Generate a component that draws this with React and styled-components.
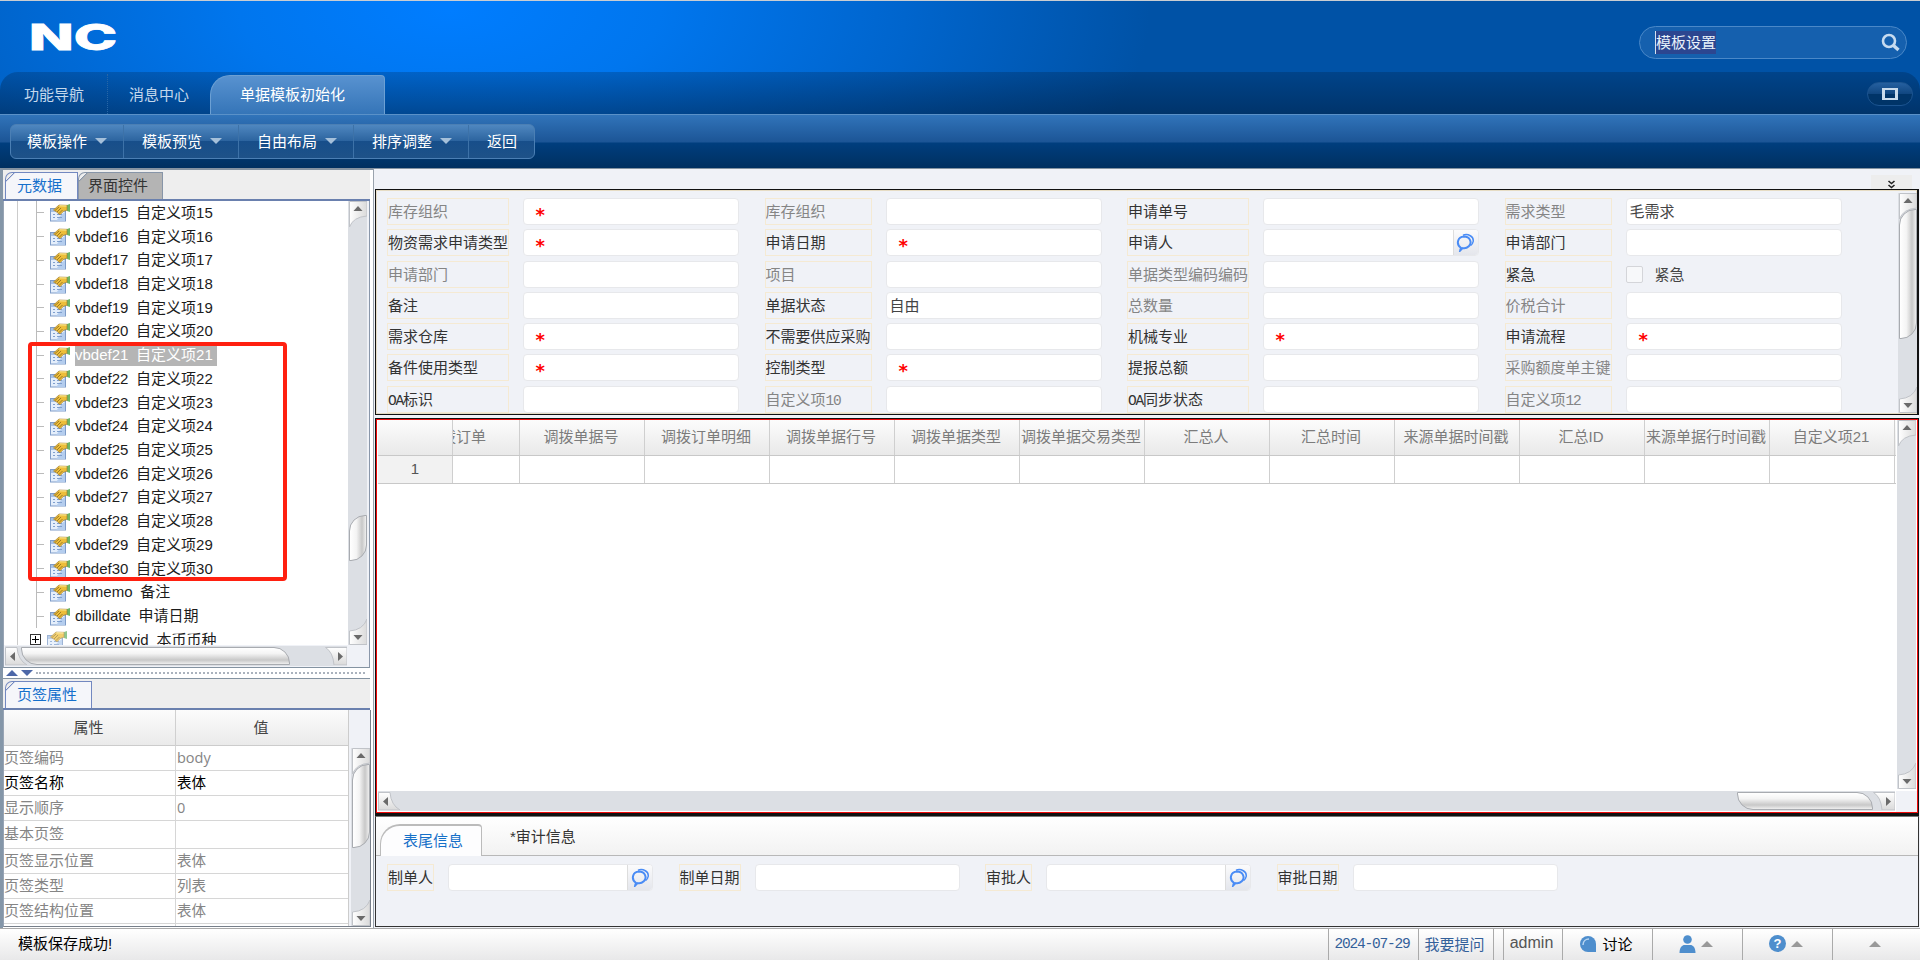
import React from "react";
import styled, { createGlobalStyle, css } from "styled-components";

const GlobalStyle = createGlobalStyle`
  * {
    box-sizing: border-box;
  }
  body {
    margin: 0;
    overflow: hidden;
    font-family: "Liberation Sans", "Noto Sans CJK SC", sans-serif;
    font-size: 15px;
    color: #000;
  }
`;

const Page = styled.div`
  width: 1920px;
  height: 960px;
  display: flex;
  flex-direction: column;
  background: #f0f2f7;
  white-space: nowrap;
`;

/* ---------- header ---------- */

const Header = styled.header`
  height: 114px;
  flex: none;
  display: flex;
  flex-direction: column;
  border-top: 1px solid #c9cdd2;
  background: radial-gradient(ellipse 700px 320px at 450px 10px, #007dff 0%, #0076ee 30%, #0065cd 65%, #0052a6 100%);
`;

const Brand = styled.div`
  height: 71px;
  display: flex;
  justify-content: space-between;
  align-items: flex-start;
  padding: 19px 13px 0 29px;
`;

const Logo = styled.svg`
  width: 90px;
  height: 40px;
  overflow: visible;
`;

const SearchBox = styled.div`
  width: 268px;
  height: 33px;
  margin-top: 6px;
  padding: 0 6px 0 15px;
  display: flex;
  align-items: center;
  justify-content: space-between;
  border: 1px solid #4a88c8;
  border-radius: 17px;
  background: #1560ae;
  color: #e8f1fa;
`;

const Selected = styled.span`
  height: 23px;
  line-height: 24px;
  background: #2c4690;
  border-left: 1px solid #d5e2f0;
`;

const NavStrip = styled.nav`
  height: 42px;
  display: flex;
  align-items: flex-end;
  border-radius: 18px 18px 0 0;
  background: linear-gradient(rgba(0, 10, 25, 0.2), rgba(0, 10, 25, 0.42));
  color: #c4d8ec;
`;

const NavItem = styled.div`
  width: ${(p) => p.$w}px;
  height: 40px;
  line-height: 41px;
  padding-left: ${(p) => p.$pad}px;
  border-right: ${(p) => (p.$sep ? "1px dotted #2866a6" : "none")};
`;

const NavActive = styled.div`
  width: 175px;
  height: 39px;
  line-height: 38px;
  padding-left: 29px;
  color: #fff;
  border: 1px solid #6ca0d4;
  border-bottom: none;
  border-radius: 20px 4px 0 0;
  background: linear-gradient(#5892d0, #3575b8);
`;

const WindowButton = styled.div`
  margin: 0 7px 8px auto;
  width: 46px;
  height: 24px;
  display: flex;
  align-items: center;
  justify-content: center;
  border: 1px solid #1c5490;
  border-radius: 12px;
  background: linear-gradient(#2560a0 0%, #104680 50%, #003468 51%, #003468 100%);
`;

const WindowGlyph = styled.span`
  width: 16px;
  height: 12px;
  border: 2px solid #c9dbec;
  border-width: 2px 3px;
`;

const Toolbar = styled.div`
  height: 54px;
  flex: none;
  padding: 9px 10px 0;
  border-top: 1px solid #5a91c8;
  background: linear-gradient(#3174ba 0, #1c5596 27px, #003e7e 28px, #003060 100%);
`;

const ButtonGroup = styled.div`
  width: 525px;
  height: 35px;
  display: flex;
  border: 1px solid #4b7fb4;
  border-radius: 6px;
  background: linear-gradient(#4f87c0 0%, #2c649f 48%, #174e8a 50%, #1e5288 100%);
`;

const ToolButton = styled.div`
  width: ${(p) => p.$w || 115}px;
  padding-left: ${(p) => p.$pad || 18}px;
  padding-bottom: 2px;
  display: flex;
  align-items: center;
  gap: 8px;
  color: #fff;
  border-left: ${(p) => (p.$first ? "none" : "1px solid #3d72a8")};
`;

const Triangle = styled.i`
  border: ${(p) => p.$s || 6}px solid transparent;
  ${(p) =>
    p.$up
      ? css`
          border-top-width: 0;
          border-bottom-color: ${p.$c};
        `
      : css`
          border-bottom-width: 0;
          border-top-color: ${p.$c};
        `}
`;

/* ---------- body ---------- */

const Body = styled.div`
  height: 760px;
  flex: none;
  display: flex;
`;

const Side = styled.aside`
  width: 374px;
  height: 760px;
  padding-right: 3px;
  display: flex;
  flex-direction: column;
  border-top: 2px solid #8493a1;
  border-left: 3px solid #8496a8;
  border-right: 1px solid #9aa3ad;
  background: #fff;
`;

const SideTabs = styled.div`
  height: 31px;
  flex: none;
  padding: 3px 2px 0;
  display: flex;
  align-items: flex-end;
  background: #eee;
  border-bottom: 2px solid #6a80ae;
`;

const SideTab = styled.div`
  height: 27px;
  width: ${(p) => p.$w}px;
  padding-left: ${(p) => (p.$on ? 11 : 9)}px;
  line-height: 25px;
  color: ${(p) => (p.$on ? "#1570cc" : "#333")};
  background: ${(p) =>
    p.$on
      ? "linear-gradient(135deg, #eee 5px, #7288c0 5px, #7288c0 6px, #f5f6fa 6.5px)"
      : "linear-gradient(135deg, #eee 5px, #8795a8 5px, #8795a8 6px, #b4b4b4 6.5px)"};
  border: 1px solid ${(p) => (p.$on ? "#7288c0" : "#8795a8")};
  border-bottom: none;
  border-top-left-radius: 7px;
`;

const TreeBox = styled.div`
  width: 367px;
  height: 467px;
  flex: none;
  display: grid;
  grid-template-columns: 344px 21px;
  grid-template-rows: 444px 22px;
  border-right: 1px solid #8a97aa;
  border-bottom: 1px solid #8493a1;
  border-left: 1px solid #98a4b4;
  background: #f0f2f7;
  position: relative;
`;

const Tree = styled.div`
  overflow: hidden;
  background: #fff;
`;

const TreeLines = styled.div`
  margin-left: 13px;
  border-left: 1px solid #ccc;
`;

const TreeRow = styled.div`
  height: 23.73px;
  margin-left: 18px;
  display: flex;
  align-items: center;
  border-left: 1px solid ${(p) => (p.$root ? "transparent" : "#bbb")};
`;

const Dash = styled.i`
  width: 7px;
  height: 1px;
  background: #bbb;
`;

const Expander = styled.i`
  width: 11px;
  height: 11px;
  margin-left: -7px;
  margin-right: 5px;
  position: relative;
  border: 1px solid #333;
  background: #fff;
  &::before,
  &::after {
    content: "";
    position: absolute;
    background: #000;
  }
  &::before {
    left: 1px;
    top: 4px;
    width: 7px;
    height: 1px;
  }
  &::after {
    left: 4px;
    top: 1px;
    width: 1px;
    height: 7px;
  }
`;

const TreeIcon = styled.svg`
  width: 20px;
  height: 19px;
  margin: 0 5px 0 ${(p) => (p.$root ? 1 : 6)}px;
  flex: none;
  opacity: ${(p) => (p.$root ? 0.75 : 1)};
`;

const TreeText = styled.span`
  height: 22px;
  line-height: 21px;
  padding: 0 4px 0 0;
  white-space: pre;
  word-spacing: -0.3px;
  color: ${(p) => (p.$sel ? "#fff" : "#1c1c1c")};
  background: ${(p) => (p.$sel ? "#b5b5b5" : "none")};
`;

/* red frame marking the free custom items, lies over the tree */
const Marker = styled.div`
  position: absolute;
  left: 24px;
  top: 141px;
  width: 259px;
  height: 239px;
  border: 4px solid #ff2010;
  border-radius: 4px;
`;

const Splitter = styled.div`
  height: 11px;
  flex: none;
  padding: 0 5px 0 3px;
  display: flex;
  align-items: center;
  gap: 3px;
  background: #fff;
  border-bottom: 1px solid #8493a1;
`;

const Dots = styled.i`
  flex: 1;
  border-top: 2px dotted #aab2bd;
`;

const PropBox = styled.div`
  height: 217px;
  width: 368px;
  flex: none;
  overflow: hidden;
  display: flex;
  background: #f0f2f7;
  border: 1px solid #777f8a;
  border-top: none;
  border-left-color: #98a4b4;
`;

const PropTable = styled.div`
  width: 345px;
  border-right: 1px solid #ccc;
`;

const PropHead = styled.div`
  height: 36px;
  line-height: 36px;
  display: grid;
  grid-template-columns: 172px 1fr;
  text-align: center;
  color: #444;
  background: linear-gradient(#fcfcfc, #eaeaea);
  border-bottom: 1px solid #ccc;
  & > * {
    padding-right: 2px;
  }
  & > *:first-child {
    border-right: 1px solid #d0d0d0;
  }
`;

const PropRow = styled.div`
  height: ${(p) => p.$h}px;
  line-height: ${(p) => p.$h - 2}px;
  display: grid;
  grid-template-columns: 172px 1fr;
  color: ${(p) => (p.$on ? "#000" : "#858585")};
  background: #fff;
  border-bottom: 1px solid #d6d6d6;
  & > *:first-child {
    border-right: 1px solid #d6d6d6;
  }
`;

const PropValue = styled.div`
  padding-left: 1px;
  font-family: "Open Sans", "Noto Sans CJK SC", sans-serif;
  font-size: 14.5px;
`;

const PropScroll = styled.div`
  width: 21px;
  padding: 38px 0 0 2px;
  display: flex;
`;

/* ---------- scrollbars ---------- */

const VTrack = styled.div`
  width: 19px;
  flex: 1;
  display: flex;
  flex-direction: column;
  align-items: center;
  background: #dcdfe4;
`;

const HTrack = styled.div`
  height: 20px;
  display: flex;
  align-items: center;
  background: #dcdfe4;
`;

const VThumb = styled.div`
  width: 18px;
  height: ${(p) => p.$size}px;
  margin-top: ${(p) => p.$at}px;
  border: 1px solid #a8abb0;
  border-radius: 16px 0 16px 0;
  background: linear-gradient(90deg, #fff, #f4f4f4 40%, #c8c8c8 75%, #eee);
`;

const HThumb = styled.div`
  height: 18px;
  width: ${(p) => p.$size}px;
  margin-left: ${(p) => p.$at}px;
  border: 1px solid #a8abb0;
  border-radius: 0 16px 0 16px;
  background: linear-gradient(#fff, #f4f4f4 35%, #c8c8c8 75%, #eee);
`;

const ArrowSvg = styled.svg`
  flex: none;
  display: block;
`;

const endShape = {
  up: "M0.5 0.5H18V15Q4 16 0.5 26Z",
  down: "M18 25.5H0.5V12Q14 11 18 0Z",
  left: "M0.5 0.5H12Q13 13 22 18H0.5Z",
  right: "M22 18V0.5H0.5Q8 5 9 18Z",
};
const endArrow = {
  up: "M9 5l4.5 5h-9z",
  down: "M9 21l4.5-5h-9z",
  left: "M5 9.5l5-4.5v9z",
  right: "M18 9.5l-5-4.5v9z",
};

const ScrollEnd = ({ dir }) => {
  const vertical = dir === "up" || dir === "down";
  return (
    <ArrowSvg width={vertical ? 18 : 22} height={vertical ? 26 : 18}>
      <defs>
        <linearGradient id={"end-" + dir} x2={vertical ? 1 : 0} y2={vertical ? 0 : 1}>
          <stop offset="0" stopColor="#fff" />
          <stop offset="1" stopColor="#dadada" />
        </linearGradient>
      </defs>
      <path d={endShape[dir]} fill={`url(#end-${dir})`} stroke="#c0c3c8" />
      <path d={endArrow[dir]} fill="#6a6a6a" />
    </ArrowSvg>
  );
};

const Push = styled.i`
  flex: 1;
`;

const VScroll = ({ at, size }) => (
  <VTrack>
    <ScrollEnd dir="up" />
    {size ? <VThumb $at={at} $size={size} /> : null}
    <Push />
    <ScrollEnd dir="down" />
  </VTrack>
);

const HScroll = ({ at, size }) => (
  <HTrack>
    <ScrollEnd dir="left" />
    <HThumb $at={at} $size={size} />
    <Push />
    <ScrollEnd dir="right" />
  </HTrack>
);

const TreeHScroll = styled.div`
  padding: 1px 1px 0 1px;
`;

/* ---------- main ---------- */

const Main = styled.main`
  width: 1546px;
  padding: 0 1px 0 1px;
  display: flex;
  flex-direction: column;
  border-top: 1px solid #8493a1;
`;

const TopBar = styled.div`
  height: 20px;
  flex: none;
  padding: 6px 7px 0 0;
  display: flex;
  justify-content: flex-end;
`;

const Collapse = styled.div`
  width: 41px;
  height: 14px;
  display: flex;
  justify-content: center;
  align-items: flex-end;
  background: #ededed;
`;

const FormPanel = styled.section`
  height: 226px;
  width: 1544px;
  flex: none;
  overflow: hidden;
  display: flex;
  justify-content: space-between;
  border: 1px solid #111;
  border-right-width: 2px;
  box-shadow: inset 0 0 0 1px #e6dcc4;
`;

const FormGrid = styled.div`
  display: grid;
  padding: 8px 0 0 11px;
  grid-template-columns: 122px 255.5px 107.5px 255px 122px 255.5px 107.5px 255px;
  grid-auto-rows: 27px;
  row-gap: 4.25px;
`;

const FormPair = styled.div`
  display: contents;
`;

const FieldCell = styled.div`
  padding-left: 13.5px;
`;

const FormScroll = styled.div`
  padding: 3px 0 1px 0;
  display: flex;
`;

const Label = styled.div`
  height: 27px;
  line-height: 26px;
  border: 1px solid #f5ead3;
  overflow: hidden;
  color: ${(p) => (p.$dim ? "#858585" : "#333")};
`;

const Field = styled.div`
  width: ${(p) => p.$w || 216}px;
  height: 27px;
  line-height: 25px;
  padding-left: 3px;
  flex: none;
  display: flex;
  color: #444;
  background: #fff;
  border: 1px solid #e7e8eb;
  border-radius: 4px;
  overflow: hidden;
`;

const Star = styled.span`
  padding-left: 9px;
  color: #f00;
  font: 700 18px/31px "DejaVu Sans", sans-serif;
`;

const RefButton = styled.span`
  width: 25px;
  margin-left: auto;
  display: flex;
  align-items: center;
  justify-content: center;
  border-left: 1px solid #ddd;
  background: linear-gradient(#fbfbfc, #e4e6ec);
`;

const CheckRow = styled.div`
  display: flex;
  align-items: center;
  gap: 12px;
  height: 27px;
  line-height: 25px;
  color: #444;
`;

const CheckBox = styled.span`
  width: 17px;
  height: 17px;
  border: 1px solid #d4d5d9;
  border-radius: 2px;
  background: #f7f8fa;
`;

const Half = styled.span`
  font: 14.5px "Liberation Mono", monospace;
  letter-spacing: -1.2px;
`;

const TablePanel = styled.section`
  width: 1544px;
  height: 398px;
  margin-top: 3px;
  flex: none;
  display: grid;
  grid-template-columns: 1519px 21px;
  grid-template-rows: 1fr 21px;
  border: 1px solid #111;
  border-bottom-width: 3px;
  padding: 1px;
  background: #fff;
  box-shadow: inset 0 0 0 1px #f00a0a;
`;

const TableArea = styled.div`
  padding: 0 0 0 1px;
  overflow: hidden;
`;

const TableRow = styled.div`
  width: 1518px;
  height: ${(p) => (p.$head ? 36 : 28)}px;
  line-height: ${(p) => (p.$head ? 34 : 26)}px;
  display: grid;
  grid-template-columns: 75px 67px repeat(11, 125px);
  color: #7c7c7c;
  background: ${(p) => (p.$head ? "linear-gradient(#fcfcfc, #e9e9e9)" : "#fff")};
  border-bottom: 1px solid #c8c8c8;
`;

const Cell = styled.div`
  display: flex;
  justify-content: ${(p) => (p.$end ? "flex-end" : "center")};
  padding-right: ${(p) => (p.$end ? 33 : p.$num ? 0 : 2)}px;
  overflow: hidden;
  color: ${(p) => (p.$num ? "#555" : "inherit")};
  background: ${(p) => (p.$num ? "#f2f2f2" : "none")};
  border-right: 1px solid #cfcfcf;
`;

const HeadClip = styled.span`
  flex: none;
`;

const TableScroll = styled.div`
  padding: 0 1px 2px 1px;
  display: flex;
`;

const TableHScroll = styled.div`
  padding: 0 1px 0 1px;
`;

const TableCorner = styled.div`
  background: #f0f2f7;
`;

const FootPanel = styled.section`
  width: 1544px;
  height: 111px;
  flex: none;
  border: 1px solid #333;
  border-top: 1px solid #777;
  background: #f0f2f7;
`;

const FootTabs = styled.div`
  height: 39px;
  padding-left: 4px;
  display: flex;
  align-items: flex-end;
  background: linear-gradient(#fff, #f2f2f2);
  border-bottom: 1px solid #b8b8b8;
`;

const FootTab = styled.div`
  height: 32px;
  line-height: 30px;
  margin-bottom: ${(p) => (p.$on ? "-1px" : "1px")};
  padding: ${(p) => (p.$on ? "0 18px 0 22px" : "0 0 0 28px")};
  color: ${(p) => (p.$on ? "#1570c8" : "#333")};
  background: ${(p) => (p.$on ? "#fdfdfe" : "none")};
  border: solid #bbb;
  border-width: ${(p) => (p.$on ? "2px 1px 0" : 0)};
  border-radius: 20px 4px 0 0;
`;

const FootFields = styled.div`
  padding: 8px 0 0 11px;
  display: flex;
  & > ${Field} {
    margin: 0 25.5px 0 14px;
  }
`;

/* ---------- status bar ---------- */

const StatusBar = styled.footer`
  height: 32px;
  flex: none;
  display: flex;
  align-items: stretch;
  border-top: 1px solid #aaa;
  background: linear-gradient(#fff, #e8e8e9);
`;

const Message = styled.div`
  flex: 1;
  padding-left: 18px;
  line-height: 29px;
`;

const StatusItem = styled.div`
  width: ${(p) => p.$w}px;
  padding: 0 3px 2px 0;
  display: flex;
  align-items: center;
  justify-content: center;
  gap: 5px;
  color: ${(p) => p.$c || "#000"};
  border-left: 1px solid #aaa;
`;

const DateText = styled.span`
  font: 14.5px "Liberation Mono", monospace;
  letter-spacing: -1.2px;
`;

const UserName = styled.span`
  font-size: 16px;
  line-height: 28px;
  height: 30px;
`;

const HelpDot = styled.span`
  width: 17px;
  height: 17px;
  line-height: 17px;
  border-radius: 50%;
  text-align: center;
  font-weight: 700;
  font-size: 13px;
  color: #fff;
  background: #4e8ecd;
`;

/* ---------- data ---------- */

const treeItems = [
  ...Array.from({ length: 16 }, (_, i) => `vbdef${i + 15}  自定义项${i + 15}`),
  "vbmemo  备注",
  "dbilldate  申请日期",
];

const formItems = [
  ["库存组织", 1, "*"], ["库存组织", 1], ["申请单号", 0], ["需求类型", 1, "毛需求"],
  ["物资需求申请类型", 0, "*"], ["申请日期", 0, "*"], ["申请人", 0, "ref"], ["申请部门", 0],
  ["申请部门", 1], ["项目", 1], ["单据类型编码编码", 1], ["紧急", 0, "check"],
  ["备注", 0], ["单据状态", 0, "自由"], ["总数量", 1], ["价税合计", 1],
  ["需求仓库", 0, "*"], ["不需要供应采购", 0], ["机械专业", 0, "*"], ["申请流程", 0, "*"],
  ["备件使用类型", 0, "*"], ["控制类型", 0, "*"], ["提报总额", 0], ["采购额度单主键", 1],
  ["OA标识", 0], ["自定义项10", 1], ["OA同步状态", 0], ["自定义项12", 1],
];

const columns = [
  "调拨单据号", "调拨订单明细", "调拨单据行号", "调拨单据类型", "调拨单据交易类型", "汇总人",
  "汇总时间", "来源单据时间戳", "汇总ID", "来源单据行时间戳", "自定义项21",
];

const tabProps = [
  ["页签编码", "body", 25],
  ["页签名称", "表体", 25],
  ["显示顺序", "0", 25],
  ["基本页签", "", 28],
  ["页签显示位置", "表体", 25],
  ["页签类型", "列表", 25],
  ["页签结构位置", "表体", 25],
  ["", "", 25],
];

const halfWidth = (text) =>
  text.split(/([0-9A-Z]+)/).map((part, i) => (i % 2 ? <Half key={i}>{part}</Half> : part));

const PropIcon = ({ root }) => (
  <TreeIcon viewBox="0 0 20 19" $root={root}>
    <rect x="0.5" y="5.5" width="15" height="12.500" fill="#e4eefb" stroke="#7e9cc8" />
    <path d="M1 6h14v3H1z" fill="#a5c0e4" />
    <path d="M11 12l4-3v9H6z" fill="#b4cdee" />
    <path d="M3 11.500h2M3 14.500h2M7 11.500h5M7 14.500h5" stroke="#7f9fce" strokeWidth="1.200" />
    <path d="M17 2l3-1v8l-3-1z" fill="#6db566" />
    <path d="M3.500 7l5.500-5 8 .300v5l-3.500 1-3.500 3.500-3-2.500z" fill="#edbe3a" stroke="#9a7428" strokeWidth=".6" />
    <path d="M5 7.500l4-3.500M7 9l4-4M9 10.500l3.500-3.500" stroke="#8c6820" strokeWidth=".8" />
    <path d="M9.500 2.800l7 .2" stroke="#fff0a0" />
  </TreeIcon>
);

const RefIcon = () => (
  <svg width="19" height="19" viewBox="0 0 19 19" fill="none" stroke="#4a8cf5">
    <path d="M7 2.200C12 .300 18 3.500 17.200 8.500c-.4 2.200-1.500 3.300-2.700 4" strokeWidth="1.500" />
    <path d="M4.200 17.500l.6-2.800C-.200 11 1.500 4 8 3.600c6 0 8.500 6 4.800 9.600-2 2-4.500 2.300-6.200 1.900z" strokeWidth="2" />
  </svg>
);

const FormValue = ({ value }) => {
  if (value === "check") {
    return (
      <CheckRow>
        <CheckBox />
        紧急
      </CheckRow>
    );
  }
  return (
    <Field>
      {value === "*" && <Star>*</Star>}
      {value === "ref" && (
        <RefButton>
          <RefIcon />
        </RefButton>
      )}
      {value !== "*" && value !== "ref" && value}
    </Field>
  );
};

const App = () => {
  return (
    <Page>
      <GlobalStyle />
      <Header>
        <Brand>
          <Logo>
            <text
              x="0"
              y="30"
              fill="#fff"
              stroke="#fff"
              strokeWidth="0.8"
              fontFamily="Inter"
              fontWeight="800"
              fontSize="36"
              textLength="88"
              lengthAdjust="spacingAndGlyphs"
            >
              NC
            </text>
          </Logo>
          <SearchBox>
            <Selected>模板设置</Selected>
            <svg width="19" height="19" fill="none" stroke="#c6dbf0">
              <circle cx="8" cy="8" r="6" strokeWidth="2.6" />
              <path d="M12.500 12.500l5 4.500" strokeWidth="3.400" />
            </svg>
          </SearchBox>
        </Brand>
        <NavStrip>
          <NavItem $w={108} $pad={24} $sep>功能导航</NavItem>
          <NavItem $w={102} $pad={21}>消息中心</NavItem>
          <NavActive>单据模板初始化</NavActive>
          <WindowButton>
            <WindowGlyph />
          </WindowButton>
        </NavStrip>
      </Header>
      <Toolbar>
        <ButtonGroup>
          <ToolButton $first $w={112} $pad={16}>模板操作 <Triangle $c="#a5c0da" /></ToolButton>
          <ToolButton>模板预览 <Triangle $c="#a5c0da" /></ToolButton>
          <ToolButton>自由布局 <Triangle $c="#a5c0da" /></ToolButton>
          <ToolButton>排序调整 <Triangle $c="#a5c0da" /></ToolButton>
          <ToolButton $w={66}>返回</ToolButton>
        </ButtonGroup>
      </Toolbar>

      <Body>
        <Side>
          <SideTabs>
            <SideTab $on $w={73}>元数据</SideTab>
            <SideTab $w={85}>界面控件</SideTab>
          </SideTabs>
          <TreeBox>
            <Tree>
              <TreeLines>
                {treeItems.map((text) => (
                  <TreeRow key={text}>
                    <Dash />
                    <PropIcon />
                    <TreeText $sel={text.startsWith("vbdef21")}>{text}</TreeText>
                  </TreeRow>
                ))}
                <TreeRow $root>
                  <Expander />
                  <PropIcon root />
                  <TreeText>{"ccurrencyid  本币币种"}</TreeText>
                </TreeRow>
              </TreeLines>
            </Tree>
            <VScroll at={288} size={46} />
            <TreeHScroll>
              <HScroll at={-6} size={269} />
            </TreeHScroll>
            <Marker />
          </TreeBox>
          <Splitter>
            <Triangle $up $c="#4d68a8" />
            <Triangle $c="#4d68a8" />
            <Dots />
          </Splitter>
          <SideTabs>
            <SideTab $on $w={87}>页签属性</SideTab>
          </SideTabs>
          <PropBox>
            <PropTable>
              <PropHead>
                <div>属性</div>
                <div>值</div>
              </PropHead>
              {tabProps.map(([name, value, h], i) => (
                <PropRow key={i} $h={h} $on={i === 1}>
                  <div>{name}</div>
                  <PropValue>{value}</PropValue>
                </PropRow>
              ))}
            </PropTable>
            <PropScroll>
              <VScroll at={-10} size={84} />
            </PropScroll>
          </PropBox>
        </Side>

        <Main>
          <TopBar>
            <Collapse>
              <svg width="9" height="9" fill="none" stroke="#222" strokeWidth="1.600">
                <path d="M1.500 1l3 2.500 3-2.500M1.500 5l3 2.500 3-2.500" />
              </svg>
            </Collapse>
          </TopBar>
          <FormPanel>
            <FormGrid>
              {formItems.map(([label, dim, value], i) => (
                <FormPair key={i}>
                  <Label $dim={dim}>{halfWidth(label)}</Label>
                  <FieldCell>
                    <FormValue value={value} />
                  </FieldCell>
                </FormPair>
              ))}
            </FormGrid>
            <FormScroll>
              <VScroll at={-10} size={130} />
            </FormScroll>
          </FormPanel>
          <TablePanel>
            <TableArea>
              <TableRow $head>
                <Cell />
                <Cell $end>
                  <HeadClip>调拨订单</HeadClip>
                </Cell>
                {columns.map((name) => (
                  <Cell key={name}>{name}</Cell>
                ))}
              </TableRow>
              <TableRow>
                <Cell $num>1</Cell>
                <Cell />
                {columns.map((name) => (
                  <Cell key={name} />
                ))}
              </TableRow>
            </TableArea>
            <TableScroll>
              <VScroll />
            </TableScroll>
            <TableHScroll>
              <HScroll at={1337} size={143} />
            </TableHScroll>
            <TableCorner />
          </TablePanel>
          <FootPanel>
            <FootTabs>
              <FootTab $on>表尾信息</FootTab>
              <FootTab>*审计信息</FootTab>
            </FootTabs>
            <FootFields>
              <Label>制单人</Label>
              <Field $w={205}>
                <RefButton>
                  <RefIcon />
                </RefButton>
              </Field>
              <Label>制单日期</Label>
              <Field $w={205} />
              <Label>审批人</Label>
              <Field $w={205}>
                <RefButton>
                  <RefIcon />
                </RefButton>
              </Field>
              <Label>审批日期</Label>
              <Field $w={205} />
            </FootFields>
          </FootPanel>
        </Main>
      </Body>

      <StatusBar>
        <Message>模板保存成功!</Message>
        <StatusItem $w={90} $c="#33609a"><DateText>2024-07-29</DateText></StatusItem>
        <StatusItem $w={75} $c="#33609a">我要提问</StatusItem>
        <StatusItem $w={10} />
        <StatusItem $w={59} $c="#555"><UserName>admin</UserName></StatusItem>
        <StatusItem $w={90}>
          <svg width="18" height="18">
            <path d="M9 1a8 8 0 0 1 8 8v8H9A8 8 0 0 1 9 1z" fill="#4e8ecd" />
            <path d="M4 10c0-4 3-6 6-6" stroke="#b8d6f2" strokeWidth="1.500" fill="none" />
          </svg>
          讨论
        </StatusItem>
        <StatusItem $w={90}>
          <svg width="17" height="18" fill="#4e8ecd">
            <circle cx="8.500" cy="4.500" r="4.300" />
            <path d="M0.500 18c0-6 3-8 5-8h6c2 0 5 2 5 8z" />
          </svg>
          <Triangle $up $c="#999" />
        </StatusItem>
        <StatusItem $w={90}>
          <HelpDot>?</HelpDot>
          <Triangle $up $c="#999" />
        </StatusItem>
        <StatusItem $w={88}>
          <Triangle $up $c="#999" />
        </StatusItem>
      </StatusBar>
    </Page>
  );
};

export default App;
